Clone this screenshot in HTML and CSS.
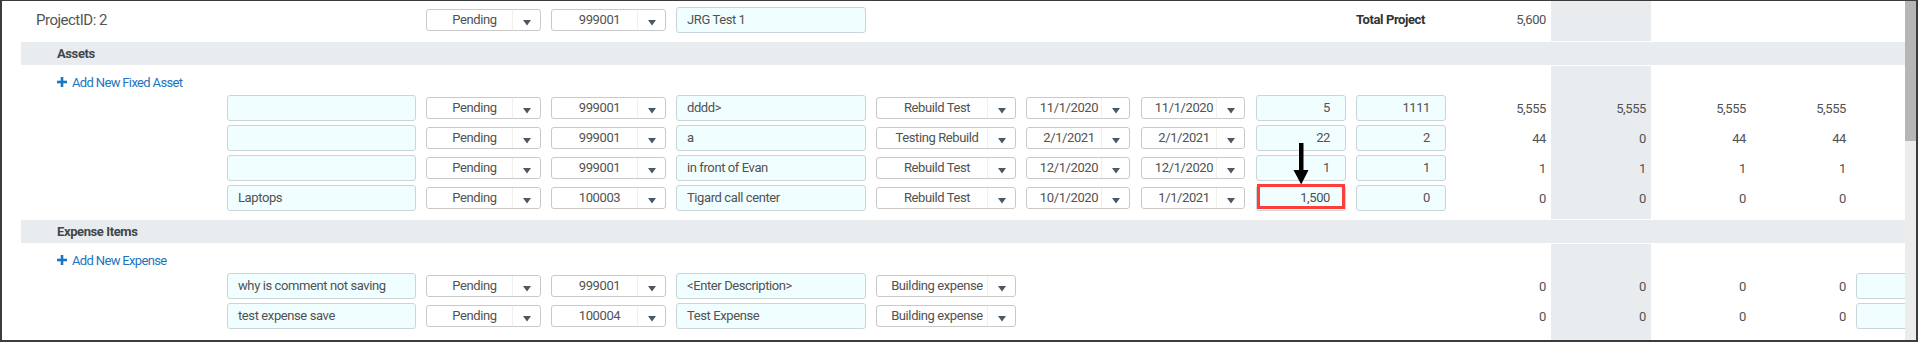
FILE: index.html
```html
<!DOCTYPE html>
<html lang="en">
<head>
  <meta charset="UTF-8" />
  <title>Project Budget</title>
  <link rel="stylesheet" href="styles.css">
</head>
<body>
  <div class="frame">
    <div class="sheet">

      <!-- project header -->
      <div class="row row-head">
        <div class="cell title">ProjectID: 2</div>
        <div class="cell"><div class="sel c-sel"><span class="sel-val">Pending</span><span class="sel-btn"><svg width="8" height="6" viewBox="0 0 8 6"><polygon points="0,0 8,0 4,5.5"/></svg></span></div></div>
        <div class="cell"><div class="sel c-sel"><span class="sel-val">999001</span><span class="sel-btn"><svg width="8" height="6" viewBox="0 0 8 6"><polygon points="0,0 8,0 4,5.5"/></svg></span></div></div>
        <div class="cell"><div class="inp c-desc">JRG Test 1</div></div>
        <div class="cell"></div>
        <div class="cell"></div>
        <div class="cell"></div>
        <div class="cell"></div>
        <div class="cell total">Total Project</div>
        <div class="cell num">5,600</div>
        <div class="cell num hl"></div>
      </div>

      <!-- assets ---------------------------------------------------->
      <div class="band">Assets</div>
      <div class="sect">
        <div class="row row-add">
          <div class="cell add-link"><svg width="10" height="10" viewBox="0 0 10 10"><rect x="0" y="3.7" width="10" height="2.6"/><rect x="3.7" y="0" width="2.6" height="10"/></svg>Add New Fixed Asset</div>
          <div class="cell hl"></div>
        </div>

        <div class="row">
          <div class="cell"></div>
          <div class="cell"><div class="inp c-text"></div></div>
          <div class="cell"><div class="sel c-sel"><span class="sel-val">Pending</span><span class="sel-btn"><svg width="8" height="6" viewBox="0 0 8 6"><polygon points="0,0 8,0 4,5.5"/></svg></span></div></div>
          <div class="cell"><div class="sel c-sel"><span class="sel-val">999001</span><span class="sel-btn"><svg width="8" height="6" viewBox="0 0 8 6"><polygon points="0,0 8,0 4,5.5"/></svg></span></div></div>
          <div class="cell"><div class="inp c-desc">dddd&gt;</div></div>
          <div class="cell"><div class="sel c-type"><span class="sel-val">Rebuild Test</span><span class="sel-btn"><svg width="8" height="6" viewBox="0 0 8 6"><polygon points="0,0 8,0 4,5.5"/></svg></span></div></div>
          <div class="cell"><div class="sel c-date"><span class="sel-val">11/1/2020</span><span class="sel-btn"><svg width="8" height="6" viewBox="0 0 8 6"><polygon points="0,0 8,0 4,5.5"/></svg></span></div></div>
          <div class="cell"><div class="sel c-date"><span class="sel-val">11/1/2020</span><span class="sel-btn"><svg width="8" height="6" viewBox="0 0 8 6"><polygon points="0,0 8,0 4,5.5"/></svg></span></div></div>
          <div class="cell"><div class="inp c-qty">5</div></div>
          <div class="cell"><div class="inp c-qty">1111</div></div>
          <div class="cell num">5,555</div>
          <div class="cell num hl">5,555</div>
          <div class="cell num">5,555</div>
          <div class="cell num">5,555</div>
        </div>

        <div class="row">
          <div class="cell"></div>
          <div class="cell"><div class="inp c-text"></div></div>
          <div class="cell"><div class="sel c-sel"><span class="sel-val">Pending</span><span class="sel-btn"><svg width="8" height="6" viewBox="0 0 8 6"><polygon points="0,0 8,0 4,5.5"/></svg></span></div></div>
          <div class="cell"><div class="sel c-sel"><span class="sel-val">999001</span><span class="sel-btn"><svg width="8" height="6" viewBox="0 0 8 6"><polygon points="0,0 8,0 4,5.5"/></svg></span></div></div>
          <div class="cell"><div class="inp c-desc">a</div></div>
          <div class="cell"><div class="sel c-type"><span class="sel-val">Testing Rebuild</span><span class="sel-btn"><svg width="8" height="6" viewBox="0 0 8 6"><polygon points="0,0 8,0 4,5.5"/></svg></span></div></div>
          <div class="cell"><div class="sel c-date"><span class="sel-val">2/1/2021</span><span class="sel-btn"><svg width="8" height="6" viewBox="0 0 8 6"><polygon points="0,0 8,0 4,5.5"/></svg></span></div></div>
          <div class="cell"><div class="sel c-date"><span class="sel-val">2/1/2021</span><span class="sel-btn"><svg width="8" height="6" viewBox="0 0 8 6"><polygon points="0,0 8,0 4,5.5"/></svg></span></div></div>
          <div class="cell"><div class="inp c-qty">22</div></div>
          <div class="cell"><div class="inp c-qty">2</div></div>
          <div class="cell num">44</div>
          <div class="cell num hl">0</div>
          <div class="cell num">44</div>
          <div class="cell num">44</div>
        </div>

        <div class="row">
          <div class="cell"></div>
          <div class="cell"><div class="inp c-text"></div></div>
          <div class="cell"><div class="sel c-sel"><span class="sel-val">Pending</span><span class="sel-btn"><svg width="8" height="6" viewBox="0 0 8 6"><polygon points="0,0 8,0 4,5.5"/></svg></span></div></div>
          <div class="cell"><div class="sel c-sel"><span class="sel-val">999001</span><span class="sel-btn"><svg width="8" height="6" viewBox="0 0 8 6"><polygon points="0,0 8,0 4,5.5"/></svg></span></div></div>
          <div class="cell"><div class="inp c-desc">in front of Evan</div></div>
          <div class="cell"><div class="sel c-type"><span class="sel-val">Rebuild Test</span><span class="sel-btn"><svg width="8" height="6" viewBox="0 0 8 6"><polygon points="0,0 8,0 4,5.5"/></svg></span></div></div>
          <div class="cell"><div class="sel c-date"><span class="sel-val">12/1/2020</span><span class="sel-btn"><svg width="8" height="6" viewBox="0 0 8 6"><polygon points="0,0 8,0 4,5.5"/></svg></span></div></div>
          <div class="cell"><div class="sel c-date"><span class="sel-val">12/1/2020</span><span class="sel-btn"><svg width="8" height="6" viewBox="0 0 8 6"><polygon points="0,0 8,0 4,5.5"/></svg></span></div></div>
          <div class="cell"><div class="inp c-qty">1</div></div>
          <div class="cell"><div class="inp c-qty">1</div></div>
          <div class="cell num">1</div>
          <div class="cell num hl">1</div>
          <div class="cell num">1</div>
          <div class="cell num">1</div>
        </div>

        <div class="row">
          <div class="cell"></div>
          <div class="cell"><div class="inp c-text">Laptops</div></div>
          <div class="cell"><div class="sel c-sel"><span class="sel-val">Pending</span><span class="sel-btn"><svg width="8" height="6" viewBox="0 0 8 6"><polygon points="0,0 8,0 4,5.5"/></svg></span></div></div>
          <div class="cell"><div class="sel c-sel"><span class="sel-val">100003</span><span class="sel-btn"><svg width="8" height="6" viewBox="0 0 8 6"><polygon points="0,0 8,0 4,5.5"/></svg></span></div></div>
          <div class="cell"><div class="inp c-desc">Tigard call center</div></div>
          <div class="cell"><div class="sel c-type"><span class="sel-val">Rebuild Test</span><span class="sel-btn"><svg width="8" height="6" viewBox="0 0 8 6"><polygon points="0,0 8,0 4,5.5"/></svg></span></div></div>
          <div class="cell"><div class="sel c-date"><span class="sel-val">10/1/2020</span><span class="sel-btn"><svg width="8" height="6" viewBox="0 0 8 6"><polygon points="0,0 8,0 4,5.5"/></svg></span></div></div>
          <div class="cell"><div class="sel c-date"><span class="sel-val">1/1/2021</span><span class="sel-btn"><svg width="8" height="6" viewBox="0 0 8 6"><polygon points="0,0 8,0 4,5.5"/></svg></span></div></div>
          <div class="cell">
            <div class="marked">
              <div class="inp c-qty">1,500</div>
              <span class="mark"></span>
              <svg class="pointer" width="16" height="42" viewBox="0 0 16 42"><rect x="6" y="0" width="4.5" height="29"/><polygon points="0.5,27 15.5,27 8.2,41.5"/></svg>
            </div>
          </div>
          <div class="cell"><div class="inp c-qty">0</div></div>
          <div class="cell num">0</div>
          <div class="cell num hl">0</div>
          <div class="cell num">0</div>
          <div class="cell num">0</div>
        </div>

        <div class="row row-pad"><div class="cell hl"></div></div>
      </div>

      <!-- expenses -------------------------------------------------->
      <div class="band">Expense Items</div>
      <div class="sect">
        <div class="row row-add">
          <div class="cell add-link"><svg width="10" height="10" viewBox="0 0 10 10"><rect x="0" y="3.7" width="10" height="2.6"/><rect x="3.7" y="0" width="2.6" height="10"/></svg>Add New Expense</div>
          <div class="cell hl"></div>
        </div>

        <div class="row">
          <div class="cell"></div>
          <div class="cell"><div class="inp c-text">why is comment not saving</div></div>
          <div class="cell"><div class="sel c-sel"><span class="sel-val">Pending</span><span class="sel-btn"><svg width="8" height="6" viewBox="0 0 8 6"><polygon points="0,0 8,0 4,5.5"/></svg></span></div></div>
          <div class="cell"><div class="sel c-sel"><span class="sel-val">999001</span><span class="sel-btn"><svg width="8" height="6" viewBox="0 0 8 6"><polygon points="0,0 8,0 4,5.5"/></svg></span></div></div>
          <div class="cell"><div class="inp c-desc">&lt;Enter Description&gt;</div></div>
          <div class="cell"><div class="sel c-type"><span class="sel-val">Building expense</span><span class="sel-btn"><svg width="8" height="6" viewBox="0 0 8 6"><polygon points="0,0 8,0 4,5.5"/></svg></span></div></div>
          <div class="cell"></div>
          <div class="cell"></div>
          <div class="cell"></div>
          <div class="cell"></div>
          <div class="cell num">0</div>
          <div class="cell num hl">0</div>
          <div class="cell num">0</div>
          <div class="cell num">0</div>
          <div class="cell tail"><div class="inp c-note"></div></div>
        </div>

        <div class="row">
          <div class="cell"></div>
          <div class="cell"><div class="inp c-text">test expense save</div></div>
          <div class="cell"><div class="sel c-sel"><span class="sel-val">Pending</span><span class="sel-btn"><svg width="8" height="6" viewBox="0 0 8 6"><polygon points="0,0 8,0 4,5.5"/></svg></span></div></div>
          <div class="cell"><div class="sel c-sel"><span class="sel-val">100004</span><span class="sel-btn"><svg width="8" height="6" viewBox="0 0 8 6"><polygon points="0,0 8,0 4,5.5"/></svg></span></div></div>
          <div class="cell"><div class="inp c-desc">Test Expense</div></div>
          <div class="cell"><div class="sel c-type"><span class="sel-val">Building expense</span><span class="sel-btn"><svg width="8" height="6" viewBox="0 0 8 6"><polygon points="0,0 8,0 4,5.5"/></svg></span></div></div>
          <div class="cell"></div>
          <div class="cell"></div>
          <div class="cell"></div>
          <div class="cell"></div>
          <div class="cell num">0</div>
          <div class="cell num hl">0</div>
          <div class="cell num">0</div>
          <div class="cell num">0</div>
          <div class="cell tail"><div class="inp c-note"></div></div>
        </div>

        <div class="row row-pad tall"><div class="cell hl"></div></div>
      </div>

    </div>
    <div class="scrollbar"><div class="scrollbar-thumb"></div></div>
  </div>
</body>
</html>
```

FILE: styles.css
```css
* { box-sizing: border-box; }

body {
  margin: 0;
  background: #fff;
  color: #525252;
  font-family: Roboto, "Liberation Sans", sans-serif;
  font-size: 13px;
  letter-spacing: -0.4px;
}

.frame {
  display: flex;
  height: 342px;
  border: 2px solid #3c3c3c;
  border-top-width: 1px;
  overflow: hidden;
}
.sheet {
  flex: 1;
  min-width: 0;
  padding-left: 19px;
  overflow: hidden;
}
.scrollbar { width: 11px; background: #ececec; }
.scrollbar-thumb { height: 140px; background: #b6b6b6; }

/* grid rows ------------------------------------------------------*/
.row {
  display: grid;
  grid-template-columns: 206px 199px 125px 125px 200px 150px 115px 115px 100px 95px 100px 100px 100px 100px 1fr;
  height: 30px;
}
.cell {
  display: flex;
  align-items: center;
  white-space: nowrap;
  min-width: 0;
}
.row-head { height: 40px; }
.row-head .cell { padding-bottom: 3px; }
.title { grid-column: span 2; padding-left: 15px; font-size: 15px; letter-spacing: -0.5px; color: #555; }
.total { font-weight: 700; color: #333; }

.num { justify-content: flex-end; padding-right: 5px; }
.hl { background: #e9ecef; }
.row-add .hl, .row-pad .hl { grid-column: 12; }

.row-add { height: 27px; }
.add-link {
  grid-column: 1 / 12;
  padding-left: 36px;
  padding-top: 5px;
  gap: 5px;
  color: #1d74c1;
  letter-spacing: -0.65px;
}
.add-link svg { fill: #1d74c1; }
.row-pad { height: 6px; }
.row-pad.tall { height: 30px; }

.band {
  height: 23px;
  margin: 1px 0;
  padding-left: 36px;
  line-height: 23px;
  background: #e9ecef;
  color: #40464c;
  font-weight: 700;
}

/* controls -------------------------------------------------------*/
.inp {
  height: 26px;
  padding: 0 10px;
  line-height: 24px;
  background: #f1feff;
  border: 1px solid #c9d5d9;
  border-radius: 3px;
  overflow: hidden;
}
.sel {
  display: flex;
  height: 22px;
  background: #fff;
  border: 1px solid #c9c9c9;
  border-radius: 3px;
}
.sel-val {
  flex: 1;
  padding-left: 10px;
  line-height: 20px;
  text-align: center;
  overflow: hidden;
}
.sel-btn {
  width: 28px;
  display: flex;
  align-items: center;
  justify-content: center;
  padding-top: 6px;
  border-left: 1px solid #f0f0f0;
}
.sel-btn svg { fill: #4c5863; }

.c-text { width: 189px; }
.c-desc { width: 190px; }
.c-sel  { width: 115px; }
.c-type { width: 140px; }
.c-date { width: 104px; }
.c-qty  { width: 90px; text-align: right; padding-right: 15px; }
.c-note { width: 110px; flex-shrink: 0; }
.tail { padding-left: 5px; }

/* annotation over the 1,500 cell */
.marked { position: relative; }
.mark {
  position: absolute;
  left: 1px; right: 1px; top: -1px; bottom: 2px;
  border: 3px solid #ff3d3d;
}
.pointer { position: absolute; left: 37px; top: -42px; fill: #000; }
```
